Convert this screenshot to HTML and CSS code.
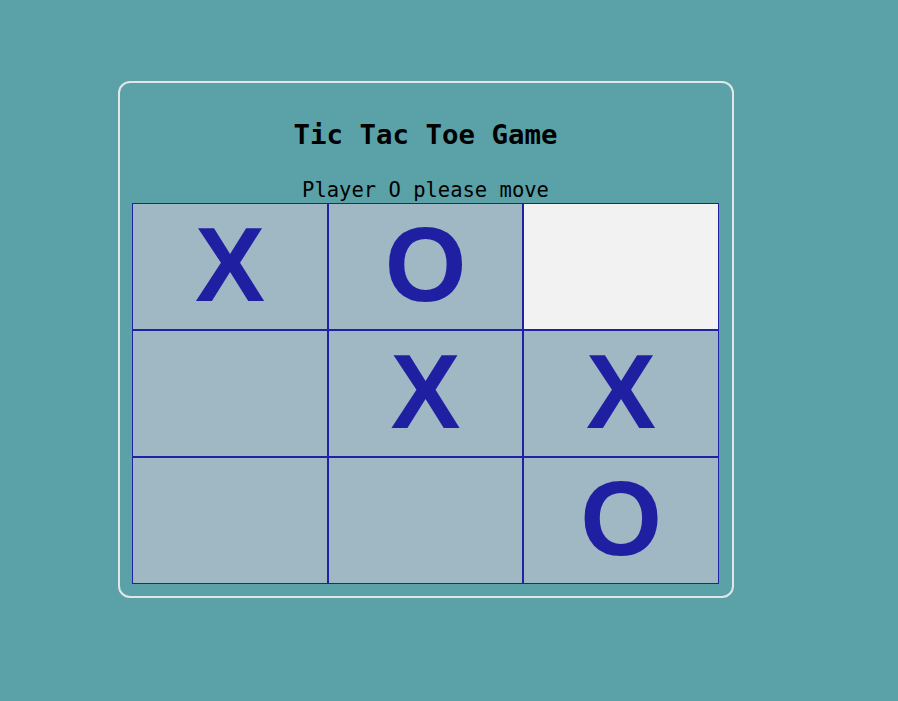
FILE: index.html
```html
<!DOCTYPE html>
<html>
<head>
<meta charset="utf-8">
<title>Tic Tac Toe</title>
<link rel="stylesheet" href="styles.css">
</head>
<body>
<div class="card">
  <h1 class="title">Tic Tac Toe Game</h1>
  <div class="status">Player O please move</div>
  <div class="board">
    <div class="cell">X</div>
    <div class="cell">O</div>
    <div class="cell cell-hover"></div>
    <div class="cell"></div>
    <div class="cell">X</div>
    <div class="cell">X</div>
    <div class="cell"></div>
    <div class="cell"></div>
    <div class="cell">O</div>
  </div>
</div>
</body>
</html>
```
FILE: styles.css
```css
html, body {
  margin: 0;
  padding: 0;
}
body {
  background: #5aa2a8;
  padding: 81px 0 0 118px;
  font-family: "DejaVu Sans Mono", monospace;
}
.card {
  box-sizing: border-box;
  width: 616px;
  height: 517px;
  border: 2px solid #e3e6e6;
  border-radius: 12px;
  padding: 35px 13px 12px 12px;
  display: flex;
  flex-direction: column;
}
.title {
  margin: 0;
  font-size: 27.4px;
  line-height: 34px;
  font-weight: bold;
  text-align: center;
  color: #000;
}
.status {
  margin-top: 26px;
  font-size: 20.5px;
  line-height: 25px;
  text-align: center;
  color: #000;
}
.board {
  display: grid;
  width: 587px;
  grid-template-columns: 196px 195px 196px;
  grid-template-rows: repeat(3, 127px);
}
.cell {
  box-sizing: border-box;
  border: 1px solid #2121a6;
  background: #a0b7c4;
  color: #1f1fa2;
  font-family: "Liberation Sans", Arial, sans-serif;
  font-weight: bold;
  font-size: 105px;
  line-height: 121px;
  text-align: center;
}
.cell-hover {
  background: #f2f2f2;
}
```
